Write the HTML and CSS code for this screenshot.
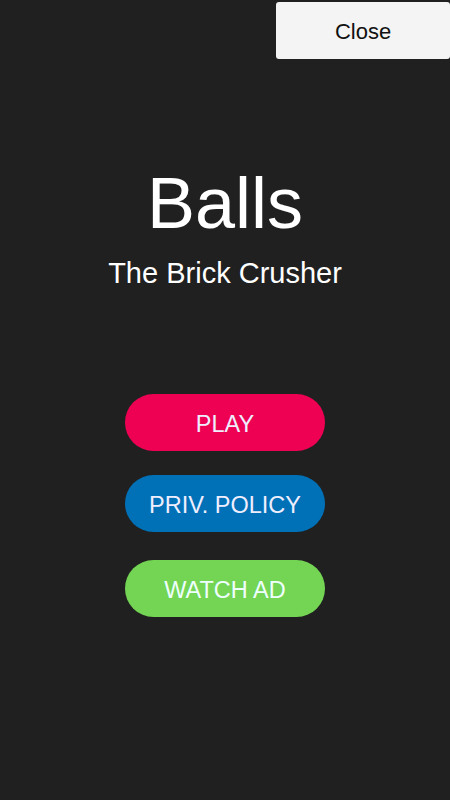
FILE: index.html
```html
<!DOCTYPE html>
<html lang="en">
<head>
    <meta charset="UTF-8">
    <title>Balls</title>
    <link rel="stylesheet" href="styles.css">
</head>
<body>
<div class="topbar">
    <button class="close">Close</button>
</div>
<div class="title">
    <h1>Balls</h1>
    <h2>The Brick Crusher</h2>
</div>
<div class="menu">
    <button class="btn play">PLAY</button>
    <button class="btn policy">PRIV. POLICY</button>
    <button class="btn watch">WATCH AD</button>
</div>
</body>
</html>
```

FILE: styles.css
```css
* {
    margin: 0;
    padding: 0;
    border: 0;
}

body {
    width: 450px;
    height: 800px;
    background: #202020;
    font-family: "Liberation Sans", Arial, sans-serif;
    color: #fff;
    overflow: hidden;
}

.topbar {
    display: flex;
    justify-content: flex-end;
    padding-top: 2px;
}

.close {
    width: 174px;
    height: 57px;
    padding-top: 2px;
    background: #f4f4f4;
    border-radius: 3px;
    font-family: inherit;
    font-size: 22px;
    color: #111;
}

.title {
    text-align: center;
    margin-top: 108px;
}

.title h1 {
    font-size: 72px;
    font-weight: normal;
    line-height: 72px;
}

.title h2 {
    font-size: 29px;
    font-weight: normal;
    line-height: 32px;
    margin-top: 18px;
}

.menu {
    display: flex;
    flex-direction: column;
    align-items: center;
    margin-top: 105px;
}

.btn {
    width: 200px;
    height: 57px;
    padding-top: 3px;
    border-radius: 29px;
    font-family: inherit;
    font-size: 23.5px;
    color: #eef;
    margin-bottom: 24px;
}

.play {
    background: #ee0053;
}

.policy {
    background: #0070b7;
    margin-bottom: 28px;
}

.watch {
    background: #73d553;
    color: #eff;
}
```
